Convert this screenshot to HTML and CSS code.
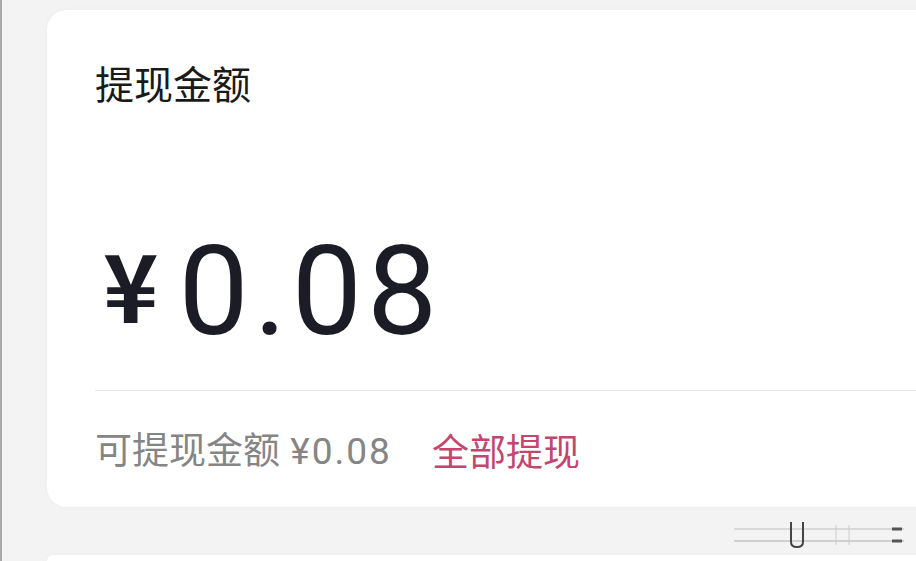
FILE: index.html
```html
<!DOCTYPE html>
<html lang="zh-CN">
<head>
    <meta charset="UTF-8">
    <meta name="viewport" content="width=device-width, initial-scale=1.0">
    <title>提现金额</title>
    <link rel="stylesheet" href="styles.css">
</head>
<body>
    <div class="page">
        <div class="card">
            <h2 class="title">提现金额</h2>
            <div class="amount">
                <span class="yen">¥</span><span class="num">0.08</span>
            </div>
            <div class="divider"></div>
            <div class="avail">
                <span class="avail-text">可提现金额 <span class="avail-num">¥0.08</span></span>
                <a class="all" href="#">全部提现</a>
            </div>
        </div>
        <div class="card next"></div>
    </div>

    <svg class="mark" width="190" height="30" viewBox="0 0 190 30">
        <line x1="10" y1="9" x2="180" y2="9" stroke="#d8d8d8" stroke-width="2"/>
        <line x1="10" y1="21" x2="180" y2="21" stroke="#d0d0d0" stroke-width="2"/>
        <path d="M67 2 V22 Q67 27 73 27 Q79 27 79 22 V2" fill="none" stroke="#444" stroke-width="2"/>
        <line x1="112" y1="5" x2="112" y2="25" stroke="#ccc" stroke-width="1"/>
        <line x1="125" y1="5" x2="125" y2="25" stroke="#ccc" stroke-width="1"/>
        <line x1="168" y1="9" x2="178" y2="9" stroke="#555" stroke-width="3"/>
        <line x1="168" y1="21" x2="178" y2="21" stroke="#555" stroke-width="3"/>
    </svg>
</body>
</html>
```

FILE: styles.css
```css
body {
    margin: 0;
    background-color: #f3f3f3;
    font-family: Roboto, "Noto Sans CJK SC", sans-serif;
    overflow: hidden;
    height: 561px;
    border-left: 2px solid #a8a8a8;
    box-sizing: border-box;
    position: relative;
}
.page {
    padding: 10px 0 0 45px;
}
.card {
    background: white;
    border-radius: 20px;
    margin-right: -40px;
    padding: 0 0 0 48px;
    height: 497px;
    box-sizing: border-box;
    box-shadow: 0 0 6px rgba(0,0,0,0.03);
}
.card.next {
    margin-top: 48px;
    height: 6px;
    border-radius: 20px 20px 0 0;
}
.title {
    margin: 0;
    padding-top: 46px;
    font-family: "Noto Sans CJK SC", sans-serif;
    font-weight: 400;
    font-size: 39px;
    line-height: 52px;
    color: #1a1a1a;
}
.amount {
    margin-top: 122px;
    height: 122px;
    display: flex;
    align-items: center;
    color: #1c1c26;
}
.yen {
    font-family: "Noto Sans CJK SC", sans-serif;
    font-weight: 700;
    font-size: 94px;
    line-height: 1;
    margin-left: 8px;
    margin-right: 20px;
    margin-bottom: 18px;
}
.num {
    font-family: Roboto, sans-serif;
    font-size: 125px;
    line-height: 1;
    letter-spacing: 5px;
}
.divider {
    margin-top: 38px;
    height: 1px;
    background: #e6e6e6;
}
.avail {
    margin-top: 33px;
    display: flex;
    align-items: center;
    gap: 40px;
    font-family: "Noto Sans CJK SC", sans-serif;
    font-size: 37px;
    line-height: 48px;
}
.avail-text {
    color: #858585;
}
.avail-num {
    font-family: Roboto, sans-serif;
    letter-spacing: 2px;
    margin-left: 2px;
}
.all {
    color: #c4466f;
    text-decoration: none;
}
.mark {
    position: absolute;
    left: 722px;
    top: 520px;
}
```
